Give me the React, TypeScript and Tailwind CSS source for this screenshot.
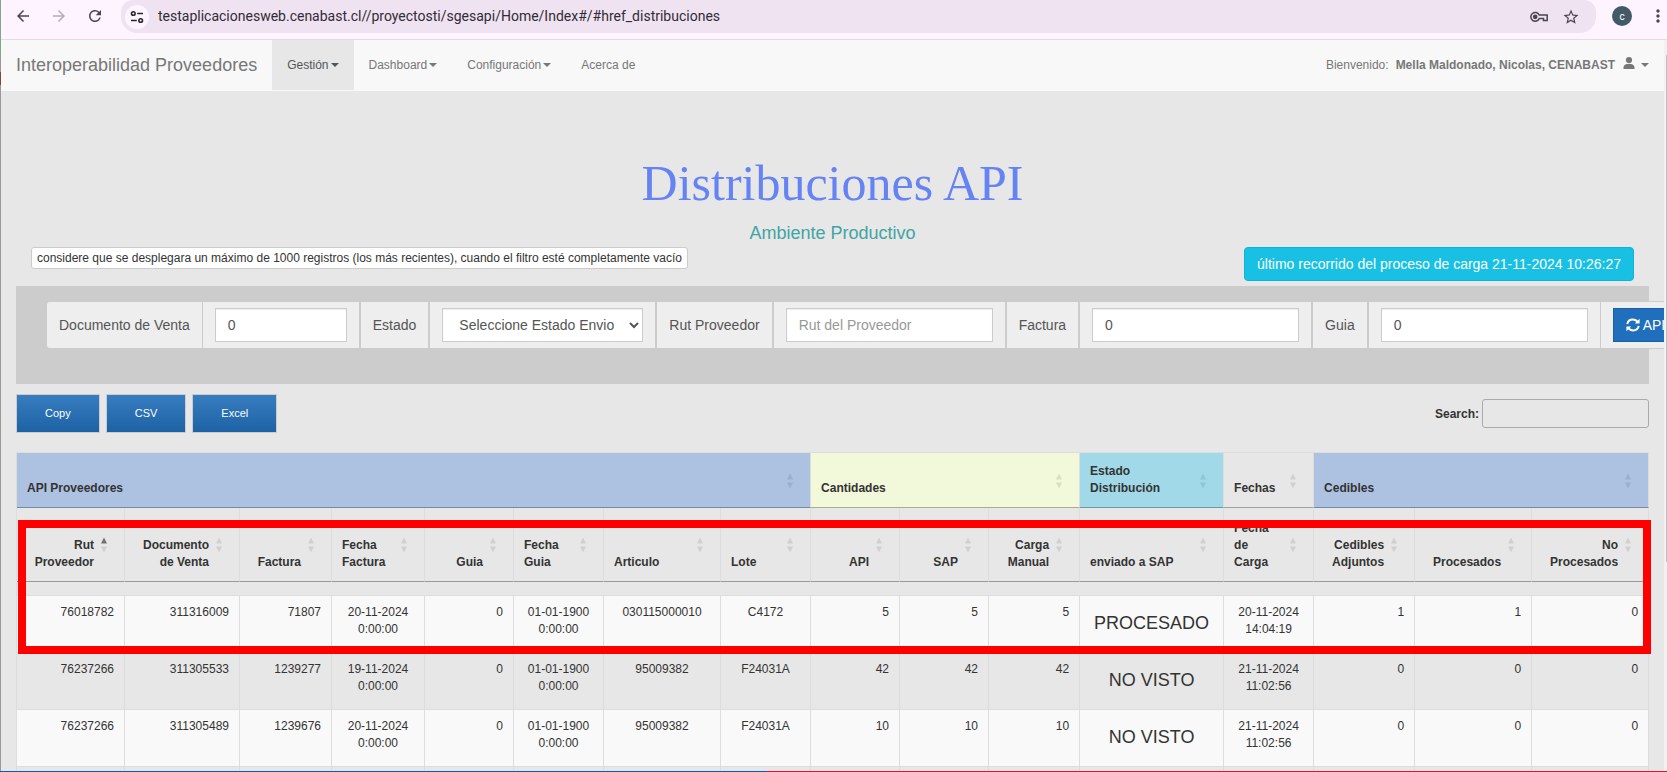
import React from "react";
import { MdArrowBack, MdArrowForward, MdRefresh, MdStarBorder, MdMoreVert } from "react-icons/md";

type Align = "left" | "right" | "center";

interface Column {
  label: string;
  width: number;
  head: Align;
  cell: Align;
}

const columns: Column[] = [
  { label: "Rut Proveedor", width: 108, head: "right", cell: "right" },
  { label: "Documento de Venta", width: 115, head: "right", cell: "right" },
  { label: "Factura", width: 92, head: "right", cell: "right" },
  { label: "Fecha Factura", width: 93, head: "left", cell: "center" },
  { label: "Guia", width: 89, head: "right", cell: "right" },
  { label: "Fecha Guia", width: 90, head: "left", cell: "center" },
  { label: "Articulo", width: 117, head: "left", cell: "center" },
  { label: "Lote", width: 90, head: "left", cell: "center" },
  { label: "API", width: 89, head: "right", cell: "right" },
  { label: "SAP", width: 89, head: "right", cell: "right" },
  { label: "Carga Manual", width: 91, head: "right", cell: "right" },
  { label: "enviado a SAP", width: 144, head: "left", cell: "center" },
  { label: "Fecha de Carga", width: 90, head: "left", cell: "center" },
  { label: "Cedibles Adjuntos", width: 101, head: "right", cell: "right" },
  { label: "Procesados", width: 117, head: "right", cell: "right" },
  { label: "No Procesados", width: 117, head: "right", cell: "right" },
];

const groups = [
  { label: "API Proveedores", span: 8, tone: "bg-[#adc1e1] border-b-[#7987a0]" },
  { label: "Cantidades", span: 3, tone: "bg-[#f2f8da] border-b-[#a9ad98]" },
  { label: "Estado Distribución", span: 1, tone: "bg-[#a1d9e8] border-b-[#7098a2]" },
  { label: "Fechas", span: 1, tone: "border-b-[#a0a0a0]" },
  { label: "Cedibles", span: 3, tone: "bg-[#adc1e1] border-b-[#7987a0]" },
];

const rows: string[][] = [
  ["76018782", "311316009", "71807", "20-11-2024 0:00:00", "0", "01-01-1900 0:00:00", "030115000010", "C4172", "5", "5", "5", "PROCESADO", "20-11-2024 14:04:19", "1", "1", "0"],
  ["76237266", "311305533", "1239277", "19-11-2024 0:00:00", "0", "01-01-1900 0:00:00", "95009382", "F24031A", "42", "42", "42", "NO VISTO", "21-11-2024 11:02:56", "0", "0", "0"],
  ["76237266", "311305489", "1239676", "20-11-2024 0:00:00", "0", "01-01-1900 0:00:00", "95009382", "F24031A", "10", "10", "10", "NO VISTO", "21-11-2024 11:02:56", "0", "0", "0"],
  ["", "", "", "", "", "", "", "", "", "", "", "", "", "", "", ""],
];

const alignClass: Record<Align, string> = {
  left: "text-left",
  right: "text-right",
  center: "text-center",
};

function Caret() {
  return <span className="inline-block border-x-4 border-t-4 border-x-transparent border-t-current align-middle" />;
}

function SortArrows({ place, ascending = false }: { place: string; ascending?: boolean }) {
  return (
    <svg viewBox="0 0 6 16" className={`absolute right-[17px] h-4 w-[6px] ${place}`} aria-hidden="true">
      <path d="M3 0.5 L6 6.5 H0 Z" fill="#333" opacity={ascending ? 0.65 : 0.13} />
      <path d="M0 9.5 H6 L3 15.5 Z" fill="#333" opacity={0.13} />
    </svg>
  );
}

function BrowserBar() {
  return (
    <div className="flex h-10 items-start border-b border-[#e6dae8] bg-[#fef4ff] text-[#4b4450]">
      <div className="flex h-8 shrink-0 items-center gap-[18px] pr-[17px] pl-[13px]">
        <button aria-label="Atrás"><MdArrowBack size={18} /></button>
        <button aria-label="Adelante" className="text-[#b5acb7]"><MdArrowForward size={18} /></button>
        <button aria-label="Recargar"><MdRefresh size={18} /></button>
      </div>
      <div className="flex h-[33px] min-w-0 flex-1 items-center rounded-b-2xl rounded-t-xl bg-[#efe3f1] pr-4 pl-1">
        <button aria-label="Información del sitio" className="flex size-6 shrink-0 items-center justify-center rounded-full bg-[#fef4ff]">
          <svg viewBox="0 0 14 14" className="size-[14px]" fill="none" stroke="#2c2530" strokeWidth="1.6">
            <circle cx="3.3" cy="3.5" r="1.8" />
            <path d="M7.2 3.5H13M1 10.5H6.8" />
            <circle cx="10.7" cy="10.5" r="1.8" />
          </svg>
        </button>
        <input
          aria-label="Dirección"
          readOnly
          value="testaplicacionesweb.cenabast.cl//proyectosti/sgesapi/Home/Index#/#href_distribuciones"
          className="ml-[9px] min-w-0 flex-1 bg-transparent font-['Roboto',sans-serif] text-[14px] text-[#322b36] outline-none"
        />
        <button aria-label="Contraseñas" className="mr-[14px]">
          <svg viewBox="0 0 18 12" className="h-3 w-[18px]" fill="none" stroke="#4b4450" strokeWidth="1.5">
            <path d="M9.2 4H17.2V9.5H13.5V7.5H9.3A4.4 4.4 0 1 1 9.2 4Z" />
            <circle cx="5.2" cy="5.8" r="1.6" fill="#4b4450" />
          </svg>
        </button>
        <button aria-label="Favorito"><MdStarBorder size={18} /></button>
      </div>
      <div className="flex h-8 shrink-0 items-center gap-[17px] pl-4">
        <button className="flex size-5 items-center justify-center rounded-full bg-[#435a66] font-['Roboto',sans-serif] text-[10px] text-white">c</button>
        <button aria-label="Menú" className="flex w-[18px] justify-center"><MdMoreVert size={20} className="shrink-0" /></button>
      </div>
    </div>
  );
}

function Navbar() {
  return (
    <nav className="flex h-[51px] items-stretch border-b border-[#f8f8f8] bg-[#f8f8f8] text-[12px] leading-5 text-[#777]">
      <a href="#inicio" className="flex items-center px-[15px] text-[18px]">Interoperabilidad Proveedores</a>
      <a href="#gestion" className="flex items-center bg-[#e7e7e7] px-[15px] text-[#555]">Gestión<span className="ml-[2px] flex"><Caret /></span></a>
      <a href="#dashboard" className="flex items-center px-[15px]">Dashboard<span className="ml-[2px] flex"><Caret /></span></a>
      <a href="#configuracion" className="flex items-center px-[15px]">Configuración<span className="ml-[2px] flex"><Caret /></span></a>
      <a href="#acerca" className="flex items-center px-[15px]">Acerca de</a>
      <a href="#usuario" className="ml-auto flex items-center pr-[15px]">
        <span className="mr-[7px]">Bienvenido:</span>
        <strong className="font-bold">Mella Maldonado, Nicolas, CENABAST</strong>
        <svg viewBox="0 0 12 12" className="mr-[6px] mb-1 ml-2 size-3" fill="#777">
          <circle cx="6" cy="3.1" r="3.1" />
          <path d="M0.5 12V10.4C0.5 8.4 2.4 7 4.2 7H7.8C9.6 7 11.5 8.4 11.5 10.4V12Z" />
        </svg>
        <Caret />
      </a>
    </nav>
  );
}

const labelCell = "flex shrink-0 items-center border border-[#ccc] bg-[#eee] px-3";
const fieldCell = "flex shrink-0 items-center border border-[#ccc] bg-[#eee] px-3 py-[6px]";
const control = "h-[34px] border border-[#ccc] bg-white px-3 text-[14px] text-[#555] shadow-[inset_0_1px_1px_rgba(0,0,0,0.075)] outline-none placeholder:text-[#999]";

function Filters() {
  return (
    <form className="h-[98px] bg-[#ccc] pt-[15px] pl-[30px]">
      <div className="flex h-12 text-[14px] text-[#555]">
        <label htmlFor="documento" className={`${labelCell} rounded-l border-r-0`}>Documento de Venta</label>
        <div className={fieldCell}><input id="documento" defaultValue="0" className={`${control} w-[132px]`} /></div>
        <label htmlFor="estado" className={labelCell}>Estado</label>
        <div className={fieldCell}>
          <select id="estado" className={`${control} w-[201px]`}>
            <option>Seleccione Estado Envio</option>
          </select>
        </div>
        <label htmlFor="rut" className={labelCell}>Rut Proveedor</label>
        <div className={fieldCell}><input id="rut" placeholder="Rut del Proveedor" className={`${control} w-[207px]`} /></div>
        <label htmlFor="factura" className={labelCell}>Factura</label>
        <div className={fieldCell}><input id="factura" defaultValue="0" className={`${control} w-[207px]`} /></div>
        <label htmlFor="guia" className={labelCell}>Guia</label>
        <div className={fieldCell}><input id="guia" defaultValue="0" className={`${control} w-[207px]`} /></div>
        <div className={`${fieldCell} border-l-0`}>
          <button type="button" className="flex h-[34px] items-center gap-[3px] border border-[#1b5fa8] bg-[#206fbc] px-3 text-white">
            <svg viewBox="0 0 14 14" className="size-[14px]" fill="none" stroke="#fff" strokeWidth="2">
              <path d="M1.3 6.2C1.8 3.3 4.2 1.6 6.9 1.6C8.6 1.6 10.2 2.3 11.3 3.5M12.7 7.8C12.2 10.7 9.8 12.4 7.1 12.4C5.4 12.4 3.8 11.7 2.7 10.5" />
              <path d="M13.6 0.8V5.6H8.8ZM0.4 13.2V8.4H5.2Z" fill="#fff" stroke="none" />
            </svg>
            API
          </button>
        </div>
      </div>
    </form>
  );
}

const exportButton = "h-[39px] border border-[#ccc] bg-linear-to-b from-[#377dbf] to-[#1d62a5] px-7 text-[11px] text-white";

function DataTable() {
  return (
    <div className="relative mt-[19px]">
      <table className="w-full table-fixed border-separate border-spacing-0 border-l border-[#ddd] text-[12px] leading-[17px] text-[#333]">
        <colgroup>
          {columns.map((c) => (
            <col key={c.label} style={{ width: c.width }} />
          ))}
        </colgroup>
        <thead className="font-bold">
          <tr className="h-14">
            {groups.map((g) => (
              <th key={g.label} colSpan={g.span} className={`relative border-t border-r border-b border-t-[#ddd] border-r-[#ddd] py-[10px] pr-[30px] pl-[10px] text-left align-bottom ${g.tone}`}>
                {g.label}
                <SortArrows place="bottom-[18px]" />
              </th>
            ))}
          </tr>
          <tr className="h-[74px]">
            {columns.map((c, i) => (
              <th key={c.label} className={`relative border-r border-b border-r-[#ddd] border-b-[#999] py-[10px] pr-[30px] pl-[10px] align-bottom ${alignClass[c.head]}`}>
                {c.label}
                <SortArrows place="bottom-7" ascending={i === 0} />
              </th>
            ))}
          </tr>
        </thead>
        <tbody>
          <tr className="h-[13px]" aria-hidden="true">
            <td colSpan={16} className="border-r border-[#ddd]" />
          </tr>
          {rows.map((r, ri) => (
            <tr key={ri} className={`h-[57px] ${ri % 2 === 0 ? "bg-[#f9f9f9]" : ""}`}>
              {r.map((v, ci) => (
                <td key={ci} className={`border-t border-r border-[#ddd] px-[10px] py-2 align-top ${alignClass[columns[ci].cell]}`}>
                  {ci === 11 ? <h4 className="my-[9px] text-[18px] leading-5">{v}</h4> : v}
                </td>
              ))}
            </tr>
          ))}
        </tbody>
      </table>
      <div className="pointer-events-none absolute top-[68px] -right-[2px] left-[2px] h-[134px] border-8 border-[#ff0000]" />
    </div>
  );
}

export default function App() {
  return (
    <div className="flex h-screen flex-col overflow-hidden bg-[#e7e7e7] font-['Liberation_Sans',Arial,sans-serif]">
      <div className="flex min-h-0 flex-1">
        <div className="flex w-px shrink-0 flex-col bg-[#999]">
          <div className="h-[53px] bg-[#7fa886]" />
          <div className="mt-[19px] h-[13px] bg-[#7a4a42]" />
        </div>
        <div className="flex min-w-0 flex-1 flex-col">
          <BrowserBar />
          <div className="flex min-h-0 flex-1">
            <main className="min-w-0 flex-1 overflow-hidden">
              <Navbar />
              <div className="px-[15px] pt-[65px]">
                <h1 className="text-center font-['Liberation_Serif',serif] text-[50px] leading-[55px] text-[#6683f3]">Distribuciones API</h1>
                <p className="mt-3 text-center text-[18px] leading-5 text-[#40a5a5]">Ambiente Productivo</p>
                <div className="mt-1 flex h-[39px] items-start justify-between px-[15px]">
                  <p className="rounded-[3px] border border-[#ccc] bg-white px-[5px] py-px text-[12px] leading-[18px] text-[#333]">
                    considere que se desplegara un máximo de 1000 registros (los más recientes), cuando el filtro esté completamente vacío
                  </p>
                  <button className="h-[34px] rounded border border-[#0fb2d8] bg-[#18c1e4] px-3 text-[14px] text-white">
                    último recorrido del proceso de carga 21-11-2024 10:26:27
                  </button>
                </div>
                <Filters />
                <div className="mt-[10px] flex h-[39px] items-center">
                  <div className="flex gap-[6px]">
                    <button className={exportButton}>Copy</button>
                    <button className={exportButton}>CSV</button>
                    <button className={exportButton}>Excel</button>
                  </div>
                  <label className="ml-auto flex items-center gap-[3px] text-[12px] font-bold text-[#333]">
                    Search:
                    <input type="search" className="h-[29px] w-[167px] rounded-[3px] border border-[#aaa] bg-transparent px-1 font-normal outline-none" />
                  </label>
                </div>
                <DataTable />
              </div>
            </main>
            <div className="w-[3px] shrink-0 bg-[#f1f1f1] pt-[15px] pl-[2px]">
              <div className="h-[507px] bg-[#c1c1c1]" />
            </div>
          </div>
        </div>
      </div>
      <div className="flex h-px shrink-0">
        <div className="w-[46%] bg-[#0f5aa8]" />
        <div className="flex-1 bg-[#d8182c]" />
      </div>
    </div>
  );
}
